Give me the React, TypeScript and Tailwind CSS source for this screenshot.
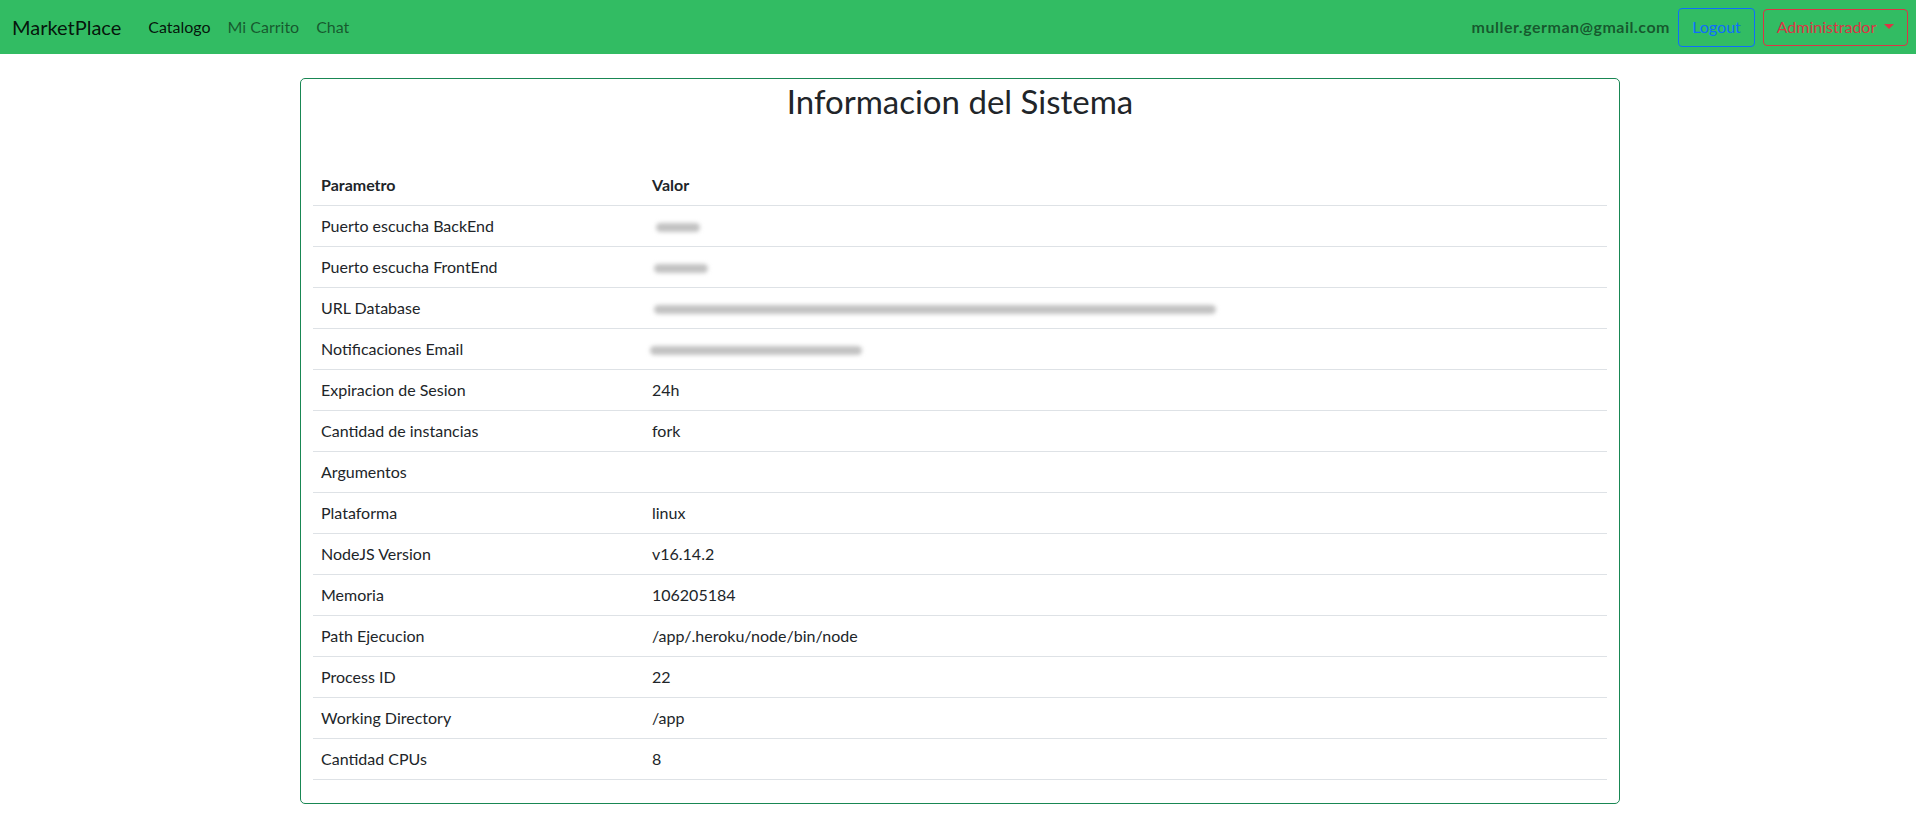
import React from "react";

const rows: { label: string; value?: string; blur?: number; shift?: number }[] = [
  { label: "Puerto escucha BackEnd", blur: 44, shift: 4 },
  { label: "Puerto escucha FrontEnd", blur: 54, shift: 2 },
  { label: "URL Database", blur: 562, shift: 2 },
  { label: "Notificaciones Email", blur: 212, shift: -2 },
  { label: "Expiracion de Sesion", value: "24h" },
  { label: "Cantidad de instancias", value: "fork" },
  { label: "Argumentos", value: "" },
  { label: "Plataforma", value: "linux" },
  { label: "NodeJS Version", value: "v16.14.2" },
  { label: "Memoria", value: "106205184" },
  { label: "Path Ejecucion", value: "/app/.heroku/node/bin/node" },
  { label: "Process ID", value: "22" },
  { label: "Working Directory", value: "/app" },
  { label: "Cantidad CPUs", value: "8" },
];

export default function App() {
  return (
    <div className="min-h-[827px] bg-white text-[#212529]" style={{ fontFamily: "Lato, 'Noto Sans', sans-serif" }}>
      <nav className="flex h-[54px] items-center justify-between bg-[#32bc63] pl-[12px] pr-[8px]">
        <div className="flex items-center">
          <span className="mr-[27px] text-[20px] text-black/90">MarketPlace</span>
          <div className="flex items-center gap-[17px] text-[16px]">
            <span className="text-black/90">Catalogo</span>
            <span className="text-black/55">Mi Carrito</span>
            <span className="text-black/55">Chat</span>
          </div>
        </div>
        <div className="flex items-center">
          <span className="mr-[8px] text-[16px] font-bold tracking-[0.5px] text-black/55">muller.german@gmail.com</span>
          <button className="mr-[8px] h-[39px] w-[77px] rounded-[4px] border border-[#0d6efd] text-[16px] text-[#0d6efd]">
            Logout
          </button>
          <button className="flex h-[37px] w-[145px] items-center justify-center gap-[8px] rounded-[4px] border border-[#dc3545] text-[16px] text-[#dc3545]">
            Administrador
            <svg width="10" height="6" viewBox="0 0 10 6"><path d="M0 0h10L5 5z" fill="#dc3545" /></svg>
          </button>
        </div>
      </nav>

      <div className="ml-[300px] mt-[24px] w-[1320px] rounded-[5px] border border-[#198754] px-[12px] pb-[23px]">
        <h2 className="pt-[3px] text-center text-[33px] font-normal leading-[38px]">Informacion del Sistema</h2>
        <table className="mt-[45px] w-full border-collapse text-[16px]">
          <thead>
            <tr className="border-b border-[#dee2e6]">
              <th className="w-[331px] px-[8px] py-[8px] text-left font-bold leading-[24px]">Parametro</th>
              <th className="px-[8px] py-[8px] text-left font-bold leading-[24px]">Valor</th>
            </tr>
          </thead>
          <tbody>
            {rows.map((r) => (
              <tr key={r.label} className="border-b border-[#dee2e6]">
                <td className="px-[8px] py-[8px] leading-[24px]">{r.label}</td>
                <td className="px-[8px] py-[8px] leading-[24px]">
                  {r.blur ? (
                    <span
                      className="inline-block h-[9px] rounded-full bg-[#c2c2c2] align-middle blur-[2px]"
                      style={{ width: r.blur, marginLeft: r.shift }}
                    />
                  ) : (
                    r.value
                  )}
                </td>
              </tr>
            ))}
          </tbody>
        </table>
      </div>
    </div>
  );
}
